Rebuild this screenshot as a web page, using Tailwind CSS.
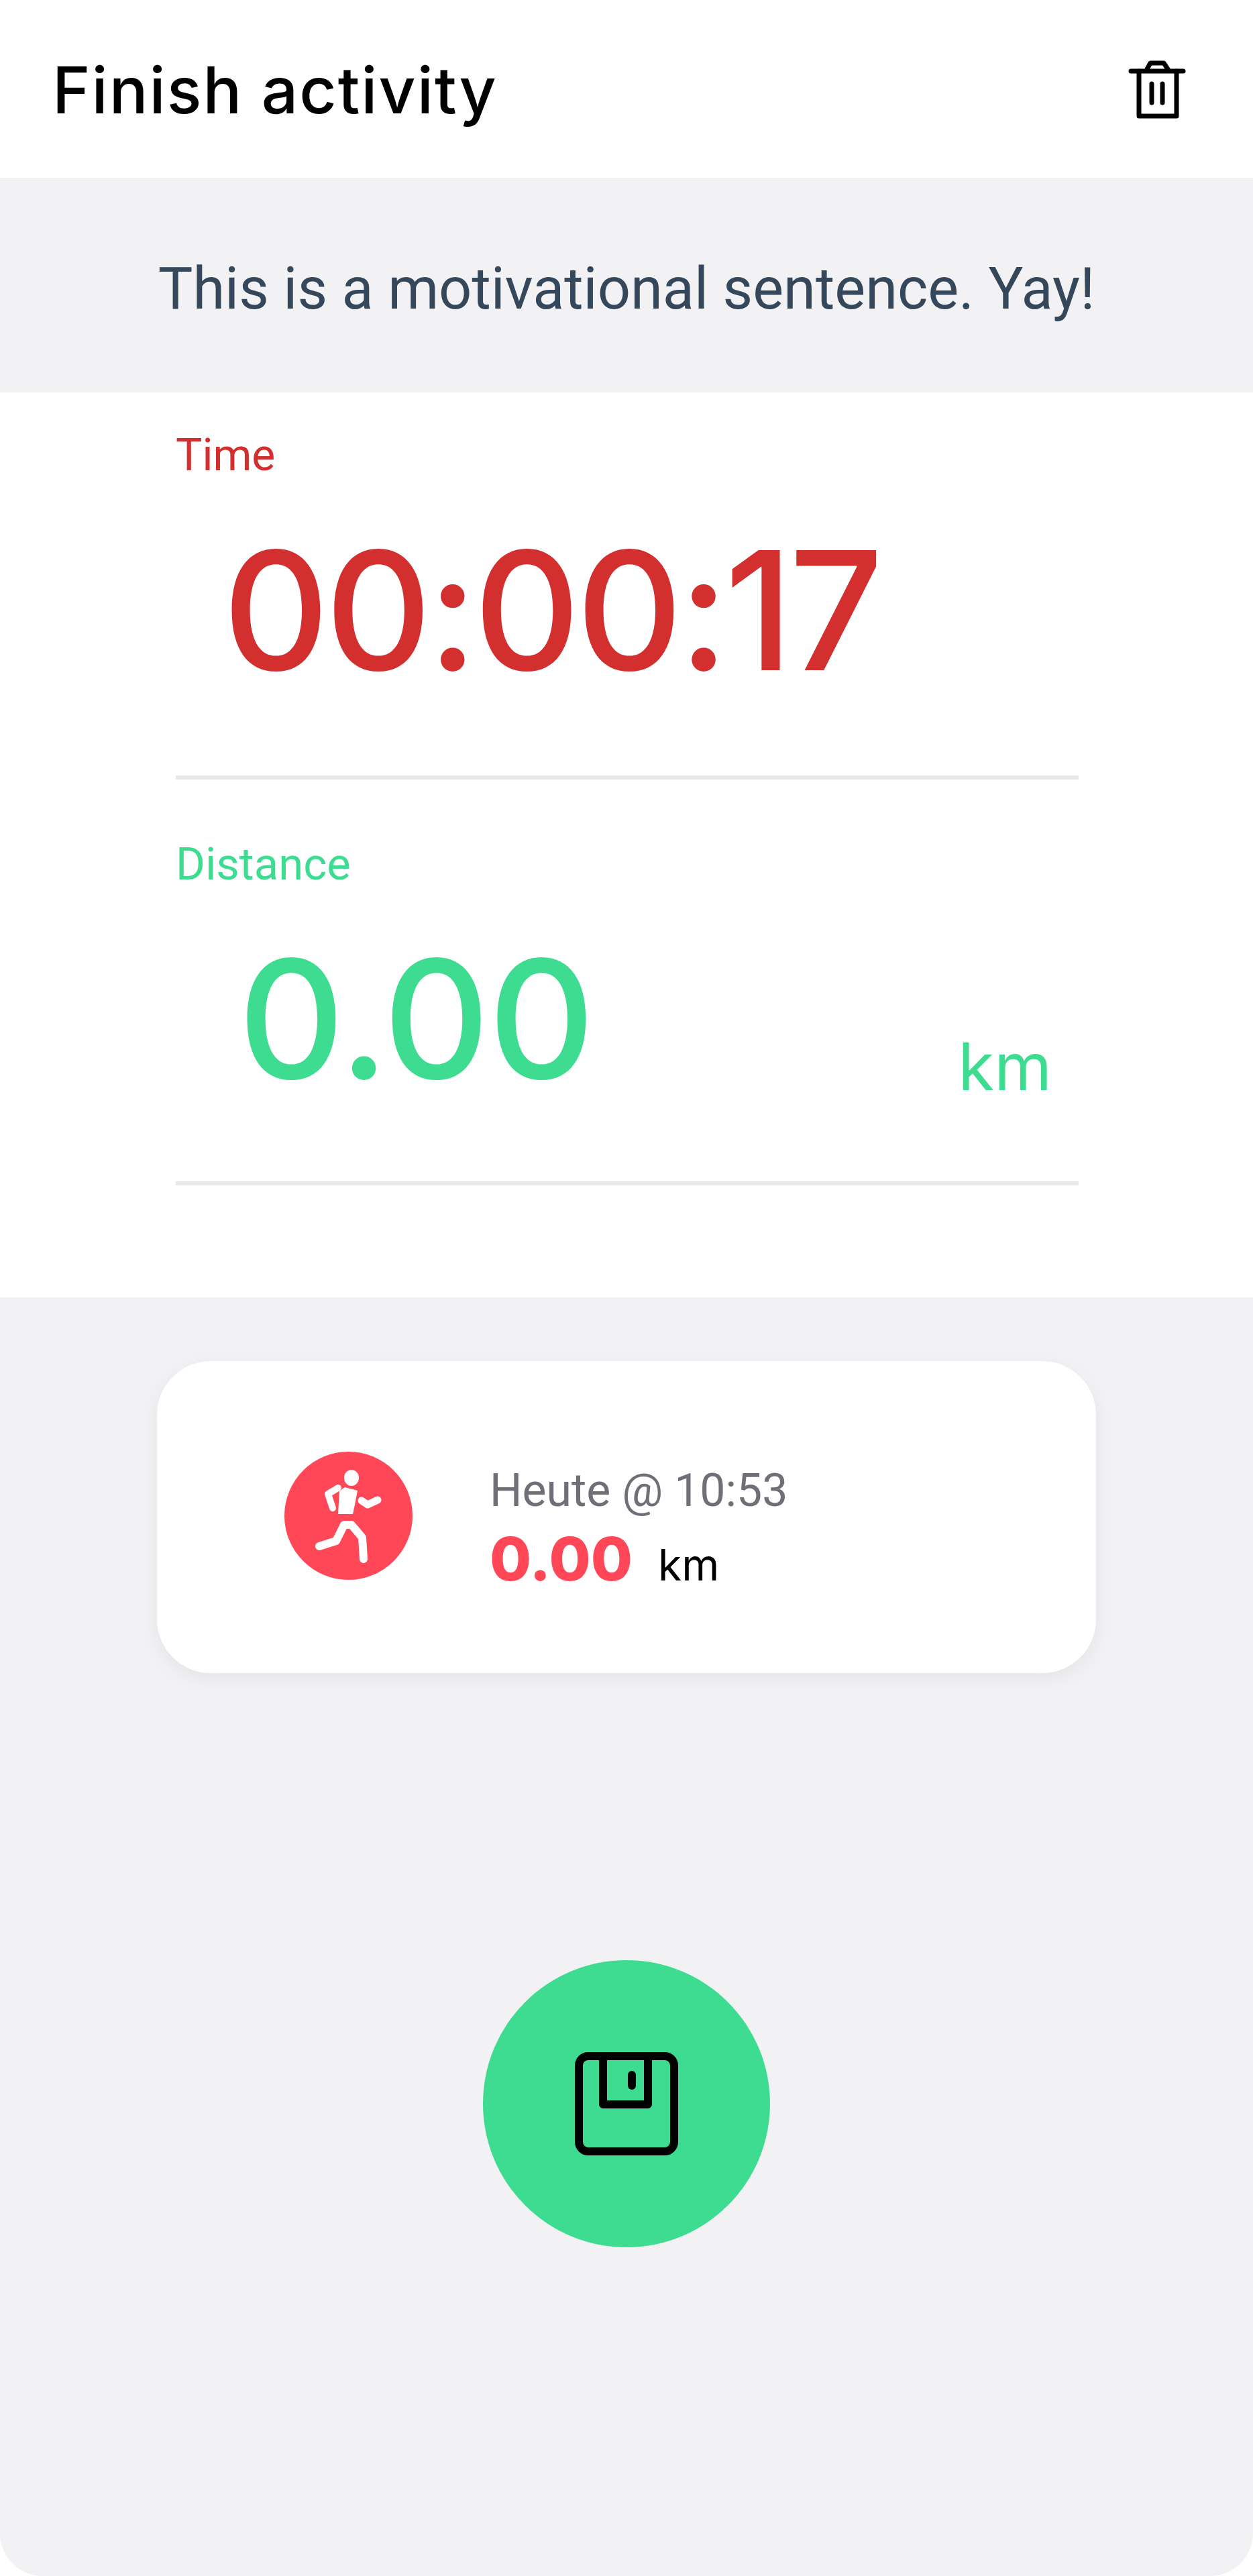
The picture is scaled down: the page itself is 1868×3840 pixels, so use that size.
<!DOCTYPE html>
<html lang="en">
<head>
  <meta charset="UTF-8">
  <title>Finish activity</title>
  <script src="https://cdn.jsdelivr.net/npm/@tailwindcss/browser@4"></script>
</head>
<body class="bg-white font-['Roboto',sans-serif]">
  <div class="w-[1868px] h-[3840px] flex flex-col bg-white">
    <!-- Header -->
    <header class="h-[265px] shrink-0 flex items-center justify-between pl-[78px] pr-[99px]">
      <h1 class="font-['Inter',sans-serif] font-medium text-[96px] leading-none tracking-[2px] text-black pt-[3px]">Finish activity</h1>
      <svg class="w-[88px] h-[88px] mt-[3px]" viewBox="0 0 88 88" fill="none" stroke="black" stroke-width="7" stroke-linecap="round" stroke-linejoin="round">
        <path d="M5 16H83"/>
        <path d="M17 16V83H73V16"/>
        <path d="M29 13L34 4H54L60 13"/>
        <path d="M36 35V63M52 35V63"/>
      </svg>
    </header>

    <!-- Motivation -->
    <div class="h-[320px] shrink-0 bg-[#f2f1f3] flex items-center justify-center pt-[12px]">
      <p class="text-[86.6px] text-[#35475a]">This is a motivational sentence. Yay!</p>
    </div>

    <!-- Stats -->
    <section class="h-[1349px] shrink-0 pl-[262px] pr-[260px] pt-[55px]">
      <div class="h-[522px] border-b-[6px] border-[#e8e8ea]">
        <p class="text-[66px] leading-[78px] text-[#d32f2f]">Time</p>
        <p class="font-['Inter',sans-serif] font-medium text-[246px] leading-[280px] tracking-[-6px] text-[#d32f2f] pl-[70px] mt-[52px]">00:00:17</p>
      </div>
      <div class="h-[605px] border-b-[6px] border-[#e8e8ea] pt-[87px]">
        <p class="text-[67px] leading-[78px] text-[#3ddc91]">Distance</p>
        <div class="flex items-end justify-between pr-[40px] mt-[52px]">
          <p class="font-['Inter',sans-serif] font-medium text-[246px] leading-[280px] tracking-[-2px] text-[#3ddc91] pl-[93px]">0.00</p>
          <p class="font-['Inter',sans-serif] text-[98px] leading-[110px] text-[#3ddc91] mb-[14px]">km</p>
        </div>
      </div>
    </section>

    <!-- Lower area -->
    <main class="flex-1 bg-[#f2f1f3] rounded-b-[64px] flex flex-col items-center pt-[95px]">
      <div class="w-[1400px] h-[465px] bg-white rounded-[80px] shadow-[0_8px_30px_rgba(0,0,0,0.06)] flex items-center pl-[190px] gap-[115px]">
        <div class="w-[191px] h-[191px] rounded-full bg-[#ff4757] flex items-center justify-center mb-[4px]">
          <svg class="w-[191px] h-[191px]" viewBox="0 0 191 191">
            <ellipse cx="100" cy="39" rx="11" ry="12" fill="white"/>
            <path d="M82 59L90 53L109 58L105 79L102 93H80Z" fill="white"/>
            <path d="M80 54L65 63L72 84" fill="none" stroke="white" stroke-width="10" stroke-linecap="round" stroke-linejoin="round"/>
            <path d="M115 73L124 79L139 72" fill="none" stroke="white" stroke-width="11" stroke-linecap="round" stroke-linejoin="round"/>
            <path d="M52 141L77 133L89 109H100L116 128L118 160" fill="none" stroke="white" stroke-width="12" stroke-linecap="round" stroke-linejoin="round"/>
          </svg>
        </div>
        <div class="flex flex-col pt-[37px]">
          <p class="text-[68px] leading-[80px] text-[#6f6f78]">Heute @ 10:53</p>
          <div class="flex items-baseline gap-[38px] mt-[17px]">
            <span class="font-['Inter',sans-serif] font-extrabold text-[90px] leading-[90px] text-[#ff4757]">0.00</span>
            <span class="font-['Inter',sans-serif] text-[64px] leading-[90px] text-black">km</span>
          </div>
        </div>
      </div>
      <button class="mt-[428px] w-[428px] h-[428px] rounded-full bg-[#3ddc91] flex items-center justify-center">
        <svg class="w-[156px] h-[156px]" viewBox="0 0 156 156" fill="none" stroke="black" stroke-width="12" stroke-linecap="round" stroke-linejoin="round">
          <rect x="7" y="7" width="142" height="142" rx="14"/>
          <path d="M43 7V79H110V7"/>
          <path d="M86 35V51"/>
        </svg>
      </button>
    </main>
  </div>
</body>
</html>
